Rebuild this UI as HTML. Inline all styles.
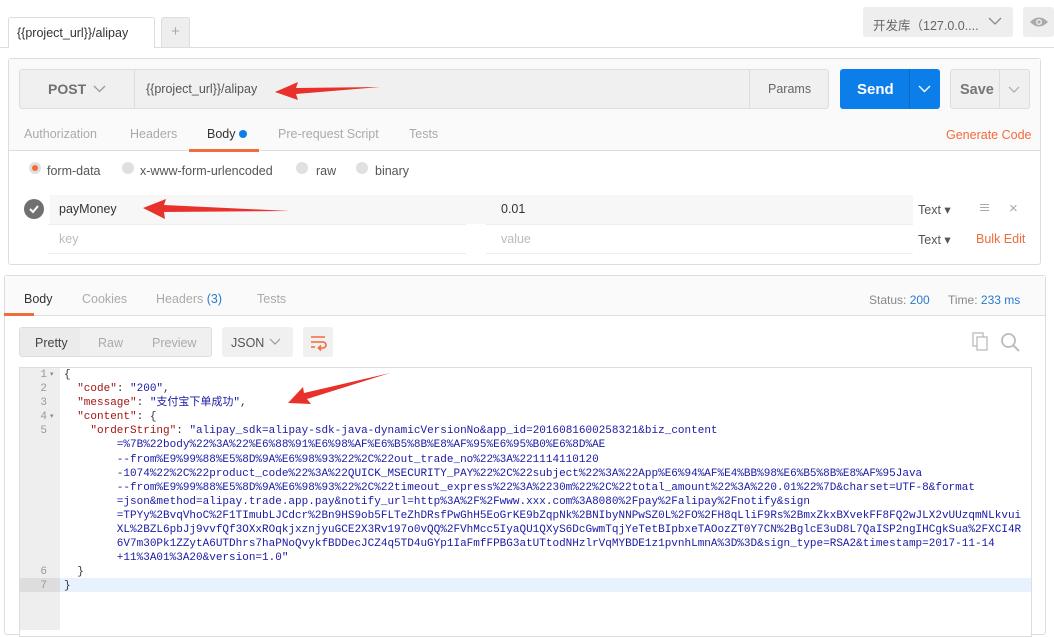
<!DOCTYPE html>
<html><head><meta charset="utf-8"><style>
*{box-sizing:border-box;margin:0;padding:0}
body{width:1054px;height:630px;overflow:hidden;background:#fff;font-family:"Liberation Sans","Noto Sans CJK SC",sans-serif;font-size:12px;color:#505050;position:relative}
.a{position:absolute}
.code{font-family:"Liberation Mono",monospace;font-size:11px;line-height:14.1px;white-space:pre;color:#1a1aa6}
.ln{font-family:"Liberation Mono",monospace;font-size:11px;line-height:14.1px;color:#999;text-align:right;width:30px;white-space:pre}
</style></head><body>
<!-- top bar -->
<div class="a" style="left:0;top:47px;width:1054px;height:1px;background:#ddd"></div>
<div class="a" style="left:8px;top:17px;width:147px;height:31px;background:#fff;border:1px solid #ddd;border-bottom:none;border-radius:3px 3px 0 0;font-size:12.5px;color:#333;padding:8px 0 0 8px">{{project_url}}/alipay</div>
<div class="a" style="left:161px;top:17px;width:29px;height:30px;background:#eee;border:1px solid #ddd;border-bottom:none;border-radius:3px 3px 0 0;color:#aaa;text-align:center;font-size:15px;line-height:28px">+</div>
<div class="a" style="left:863px;top:7px;width:150px;height:30px;background:#eee;border-radius:3px;font-size:12.5px;color:#666;padding:8px 0 0 10px">开发库（127.0.0....</div>
<svg class="a" style="left:988px;top:16px" width="14" height="10"><path d="M1 2l6 6 6-6" fill="none" stroke="#888" stroke-width="1.3"/></svg>
<div class="a" style="left:1023px;top:7px;width:31px;height:30px;background:#eee;border-radius:3px"></div>
<svg class="a" style="left:1029px;top:15px" width="20" height="14"><path d="M1 7Q10 -2 19 7Q10 16 1 7Z" fill="#aaa"/><circle cx="10" cy="7" r="3" fill="#eee"/><circle cx="10" cy="7" r="1.6" fill="#aaa"/></svg>

<!-- request panel -->
<div class="a" style="left:8px;top:58px;width:1033px;height:207px;border:1px solid #ddd;border-radius:3px;background:#fff"></div>
<div class="a" style="left:9px;top:59px;width:1031px;height:92px;background:#fafafa;border-bottom:1px solid #ddd"></div>
<div class="a" style="left:19px;top:69px;width:810px;height:40px;background:#f0f0f0;border:1px solid #ddd;border-radius:3px"></div>
<div class="a" style="left:134px;top:69px;width:1px;height:40px;background:#ddd"></div>
<div class="a" style="left:749px;top:69px;width:1px;height:40px;background:#ddd"></div>
<div class="a" style="left:48px;top:81px;font-weight:bold;font-size:14px;color:#707070">POST</div>
<svg class="a" style="left:93px;top:85px" width="13" height="8"><path d="M1 1l5.5 5.5 5.5-5.5" fill="none" stroke="#999" stroke-width="1.3"/></svg>
<div class="a" style="left:146px;top:82px;font-size:12.5px;color:#555">{{project_url}}/alipay</div>
<div class="a" style="left:768px;top:82px;font-size:12.5px;color:#666">Params</div>
<div class="a" style="left:840px;top:69px;width:100px;height:40px;background:#0b7ee9;border-radius:3px"></div>
<div class="a" style="left:909px;top:69px;width:1px;height:40px;background:#0a6ac4"></div>
<div class="a" style="left:857px;top:81px;font-weight:bold;font-size:15px;color:#fff">Send</div>
<svg class="a" style="left:918px;top:85px" width="13" height="8"><path d="M1 1l5.5 5.5 5.5-5.5" fill="none" stroke="#fff" stroke-width="1.4"/></svg>
<div class="a" style="left:950px;top:69px;width:80px;height:40px;background:#f0f0f0;border:1px solid #ddd;border-radius:3px"></div>
<div class="a" style="left:999px;top:69px;width:1px;height:40px;background:#ddd"></div>
<div class="a" style="left:960px;top:82px;font-weight:bold;font-size:14.5px;color:#777">Save</div>
<svg class="a" style="left:1008px;top:86px" width="12" height="7"><path d="M1 1l5 5 5-5" fill="none" stroke="#aaa" stroke-width="1.2"/></svg>

<div class="a" style="left:24px;top:127px;font-size:12.5px;color:#aaa">Authorization</div>
<div class="a" style="left:130px;top:127px;font-size:12.5px;color:#aaa">Headers</div>
<div class="a" style="left:207px;top:127px;font-size:12.5px;color:#333">Body</div>
<div class="a" style="left:239px;top:130px;width:8px;height:8px;border-radius:50%;background:#0b7ee9"></div>
<div class="a" style="left:189px;top:149px;width:70px;height:3px;background:#f26b3a"></div>
<div class="a" style="left:278px;top:127px;font-size:12.5px;color:#aaa">Pre-request Script</div>
<div class="a" style="left:409px;top:127px;font-size:12.5px;color:#aaa">Tests</div>
<div class="a" style="left:946px;top:128px;font-size:12.5px;color:#f26b3a">Generate Code</div>

<div class="a" style="left:29px;top:162px;width:12px;height:12px;border-radius:50%;background:#e0e0e0"></div>
<div class="a" style="left:32px;top:165px;width:6px;height:6px;border-radius:50%;background:#f26b3a"></div>
<div class="a" style="left:47px;top:164px;font-size:12.5px;color:#555">form-data</div>
<div class="a" style="left:122px;top:162px;width:12px;height:12px;border-radius:50%;background:#e0e0e0"></div>
<div class="a" style="left:140px;top:164px;font-size:12.5px;color:#555">x-www-form-urlencoded</div>
<div class="a" style="left:296px;top:162px;width:12px;height:12px;border-radius:50%;background:#e0e0e0"></div>
<div class="a" style="left:316px;top:164px;font-size:12.5px;color:#555">raw</div>
<div class="a" style="left:356px;top:162px;width:12px;height:12px;border-radius:50%;background:#e0e0e0"></div>
<div class="a" style="left:375px;top:164px;font-size:12.5px;color:#555">binary</div>

<div class="a" style="left:50px;top:195px;width:863px;height:29px;background:#f7f7f7"></div>
<div class="a" style="left:48px;top:224px;width:418px;height:1px;background:#eee"></div>
<div class="a" style="left:486px;top:224px;width:427px;height:1px;background:#eee"></div>
<div class="a" style="left:48px;top:253px;width:418px;height:1px;background:#eee"></div>
<div class="a" style="left:486px;top:253px;width:427px;height:1px;background:#eee"></div>
<div class="a" style="left:24px;top:199px;width:20px;height:20px;border-radius:50%;background:#707070"></div>
<svg class="a" style="left:28px;top:203px" width="12" height="12"><path d="M2 6l3 3 5-6" fill="none" stroke="#fff" stroke-width="2"/></svg>
<div class="a" style="left:59px;top:202px;font-size:12.5px;color:#333">payMoney</div>
<div class="a" style="left:501px;top:202px;font-size:12.5px;color:#333">0.01</div>
<div class="a" style="left:59px;top:232px;font-size:12.5px;color:#bbb">key</div>
<div class="a" style="left:501px;top:232px;font-size:12.5px;color:#bbb">value</div>
<div class="a" style="left:918px;top:202px;font-size:12.5px;color:#555">Text ▾</div>
<div class="a" style="left:918px;top:232px;font-size:12.5px;color:#555">Text ▾</div>
<div class="a" style="left:980px;top:204px;width:9px;height:1px;background:#aaa;box-shadow:0 3px 0 #aaa,0 6px 0 #aaa"></div>
<div class="a" style="left:1009px;top:200px;font-size:15px;color:#aaa">×</div>
<div class="a" style="left:976px;top:232px;font-size:12.5px;color:#f26b3a">Bulk Edit</div>

<!-- response panel -->
<div class="a" style="left:4px;top:275px;width:1042px;height:360px;border:1px solid #ddd;border-radius:3px;background:#fff"></div>
<div class="a" style="left:5px;top:276px;width:1040px;height:40px;background:#fafafa;border-bottom:1px solid #ddd"></div>
<div class="a" style="left:4px;top:313px;width:30px;height:3px;background:#f26b3a"></div>
<div class="a" style="left:24px;top:292px;font-size:12.5px;color:#333">Body</div>
<div class="a" style="left:82px;top:292px;font-size:12.5px;color:#aaa">Cookies</div>
<div class="a" style="left:156px;top:292px;font-size:12.5px;color:#aaa">Headers <span style="color:#2a7ad0">(3)</span></div>
<div class="a" style="left:257px;top:292px;font-size:12.5px;color:#aaa">Tests</div>
<div class="a" style="left:869px;top:293px;font-size:12px;color:#888">Status: <span style="color:#2a7ad0">200</span></div>
<div class="a" style="left:948px;top:293px;font-size:12px;color:#888">Time: <span style="color:#2a7ad0">233 ms</span></div>

<div class="a" style="left:19px;top:327px;width:193px;height:30px;background:#f0f0f0;border:1px solid #ddd;border-radius:3px"></div>
<div class="a" style="left:20px;top:328px;width:60px;height:28px;background:#ebebeb"></div>
<div class="a" style="left:35px;top:336px;font-size:12.5px;color:#444">Pretty</div>
<div class="a" style="left:98px;top:336px;font-size:12.5px;color:#aaa">Raw</div>
<div class="a" style="left:152px;top:336px;font-size:12.5px;color:#aaa">Preview</div>
<div class="a" style="left:222px;top:327px;width:71px;height:30px;background:#f0f0f0;border-radius:3px"></div>
<div class="a" style="left:231px;top:336px;font-size:12.5px;color:#555">JSON</div>
<svg class="a" style="left:269px;top:338px" width="12" height="7"><path d="M1 1l5 5 5-5" fill="none" stroke="#999" stroke-width="1.2"/></svg>
<div class="a" style="left:303px;top:327px;width:30px;height:30px;background:#f0f0f0;border-radius:3px"></div>
<svg class="a" style="left:308px;top:332px" width="20" height="20"><path d="M3 5h14M3 10h12a3 3 0 0 1 0 6h-4M3 15h4M13 13.5l-2.5 2.5 2.5 2.5" fill="none" stroke="#f26b3a" stroke-width="1.6"/></svg>
<svg class="a" style="left:972px;top:332px" width="18" height="20"><rect x="1" y="1" width="10" height="13" fill="none" stroke="#bbb" stroke-width="1.3"/><rect x="5" y="5" width="10" height="13" fill="#fff" stroke="#bbb" stroke-width="1.3"/></svg>
<svg class="a" style="left:1000px;top:332px" width="22" height="20"><circle cx="8.5" cy="8.5" r="6.5" fill="none" stroke="#bbb" stroke-width="1.8"/><path d="M13 13l6 6" stroke="#bbb" stroke-width="2"/></svg>

<!-- editor -->
<div class="a" style="left:19px;top:367px;width:1013px;height:270px;border:1px solid #ddd;background:#fff"></div>
<div class="a" style="left:20px;top:368px;width:40px;height:262px;background:#eee"></div>
<div class="a" style="left:60px;top:578px;width:971px;height:14px;background:#e8f2ff"></div>
<div class="a" style="left:20px;top:578px;width:40px;height:14px;background:#ddd"></div>
<div class="a ln" style="left:17px;top:368px">1
2
3
4
5









6
7</div>
<div class="a" style="left:50px;top:368px;font-size:7px;color:#888;line-height:14.1px;white-space:pre">▾


▾</div>
<div class="a code" style="left:64px;top:368px;color:#333">{
  <span style="color:#a31515">"code"</span>: <span style="color:#1a1aa6">"200"</span>,
  <span style="color:#a31515">"message"</span>: <span style="color:#1a1aa6">"支付宝下单成功"</span>,
  <span style="color:#a31515">"content"</span>: {
    <span style="color:#a31515">"orderString"</span>: <span style="color:#1a1aa6">"alipay_sdk=alipay-sdk-java-dynamicVersionNo&amp;app_id=2016081600258321&amp;biz_content</span>
<span style="color:#1a1aa6">        =%7B%22body%22%3A%22%E6%88%91%E6%98%AF%E6%B5%8B%E8%AF%95%E6%95%B0%E6%8D%AE
        --from%E9%99%88%E5%8D%9A%E6%98%93%22%2C%22out_trade_no%22%3A%221114110120
        -1074%22%2C%22product_code%22%3A%22QUICK_MSECURITY_PAY%22%2C%22subject%22%3A%22App%E6%94%AF%E4%BB%98%E6%B5%8B%E8%AF%95Java
        --from%E9%99%88%E5%8D%9A%E6%98%93%22%2C%22timeout_express%22%3A%2230m%22%2C%22total_amount%22%3A%220.01%22%7D&amp;charset=UTF-8&amp;format
        =json&amp;method=alipay.trade.app.pay&amp;notify_url=http%3A%2F%2Fwww.xxx.com%3A8080%2Fpay%2Falipay%2Fnotify&amp;sign
        =TPYy%2BvqVhoC%2F1TImubLJCdcr%2Bn9HS9ob5FLTeZhDRsfPwGhH5EoGrKE9bZqpNk%2BNIbyNNPwSZ0L%2FO%2FH8qLliF9Rs%2BmxZkxBXvekFF8FQ2wJLX2vUUzqmNLkvui
        XL%2BZL6pbJj9vvfQf3OXxROqkjxznjyuGCE2X3Rv197o0vQQ%2FVhMcc5IyaQU1QXyS6DcGwmTqjYeTetBIpbxeTAOozZT0Y7CN%2BglcE3uD8L7QaISP2ngIHCgkSua%2FXCI4R
        6V7m30Pk1ZZytA6UTDhrs7haPNoQvykfBDDecJCZ4q5TD4uGYp1IaFmfFPBG3atUTtodNHzlrVqMYBDE1z1pvnhLmnA%3D%3D&amp;sign_type=RSA2&amp;timestamp=2017-11-14
        +11%3A01%3A20&amp;version=1.0"</span>
  }
}</div>

<!-- arrows -->
<svg class="a" style="left:0;top:0" width="1054" height="630">
<polygon points="275,92 298,82 296,88 380,87 296,94 298,100" fill="#e8312a"/>
<polygon points="143,208 166,199 164,205 290,211 164,212 165,219" fill="#e8312a"/>
<polygon points="288,403 303,387 304,393 390,373 307,399 311,404" fill="#e8312a"/>
</svg>
</body></html>
